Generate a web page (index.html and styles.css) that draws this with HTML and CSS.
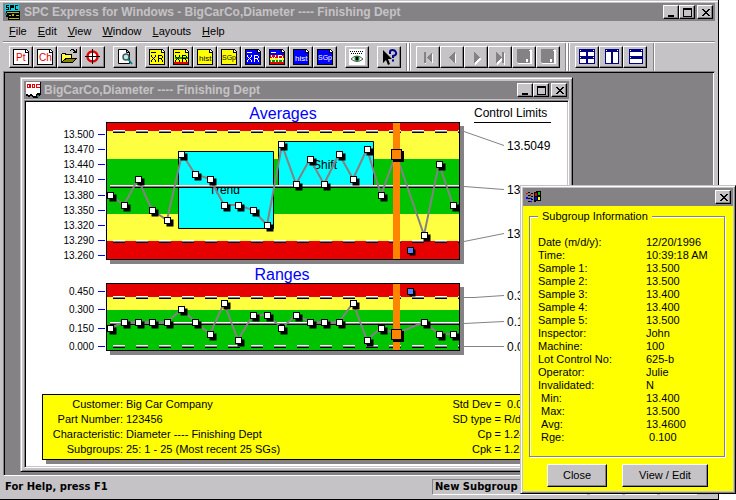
FILE: index.html
```html
<!DOCTYPE html>
<html lang="en">
<head>
<meta charset="utf-8">
<title>SPC Express for Windows</title>
<link rel="stylesheet" href="styles.css">
</head>
<body>
<svg class="defs" width="0" height="0" aria-hidden="true">
  <defs>
    <g id="pt"><path fill="#000" d="M-1-1h7v7h-7z"/><path fill="#000" d="M-3.500-3.500h7v7h-7z"/><path fill="#fff" d="M-2.500-2.500h5v5h-5z"/></g>
    <g id="removed"><path fill="#000" d="M-1-1h6v6h-6z"/><path fill="#000" d="M-3.500-3.500h7v7h-7z"/><path fill="#5a82ff" d="M-2.500-2.500h5v5h-5z"/></g>
    <g id="picked"><path fill="#000" d="M-3.500-3.500h11v11h-11z"/><path fill="#000" d="M-5.500-5.500h11v11h-11z"/><path fill="#ff8400" d="M-4.500-4.500h9v9h-9z"/></g>
    <g id="page"><path fill="#000" d="M0 0h13l3 3v13H0z"/><path fill="currentColor" d="M1 1h11v3h3v11H1z"/><path fill="#fff" d="M13 1h1v1h1v1h-2z"/></g>
    <g id="xr"><path d="M2 3h5v1H2zM2 6h1v2H2zM6 6h1v2H6zM3 8h1v1H3zM5 8h1v1H5zM4 9h1v1H4zM3 10h1v1H3zM5 10h1v1H5zM2 11h1v2H2zM6 11h1v2H6zM9 6h4v1h-3v2h3v1h-3v3H9zM13 7h1v2h-1zM12 10h1v1h-1zM13 11h1v2h-1z"/></g>
    <g id="min"><path fill="#000" d="M4 9h6v2H4z"/></g>
    <g id="max"><path fill="#000" fill-rule="evenodd" d="M3 2h9v9H3zM4 4v6h7V4z"/></g>
    <g id="cls"><path fill="#000" d="M4 3h2v1h1v1h2V4h1V3h2v1h-1v1h-1v1H9v1h1v1h1v1h1v1h-2V9H9V8H7v1H6v1H4V9h1V8h1V7h1V6H6V5H5V4H4z"/></g>
    <g id="disk"><path fill="#fff" d="M2 2h14v14H2z"/><path fill="#848284" d="M1 1h13v14H2l-1-1z"/><path fill="#fff" d="M10 11h2v3h-2zM13 2h1v1h-1z"/></g>
  </defs>
</svg>

<main class="app">
  <header class="titlebar">
    <svg class="appicon" width="16" height="16" viewBox="0 0 16 16" shape-rendering="crispEdges" aria-hidden="true">
      <path fill="#00d8e8" d="M0 0h14v8H0z"/><path fill="#000" d="M1 1h3v1H2v1h2v3H1V5h2V4H1zM5 1h4v3H6v2H5zM10 1h3v1h-2v3h2v1h-3z"/>
      <path fill="#000" d="M1 7h14v9H3v-3H1z"/><path fill="#b8b020" d="M2 8h12v1H2zM4 11h2v1H4zM7 10h2v2H7zM11 11h3v1h-3zM4 14h10v1H4z"/><path fill="#008484" d="M0 9h2v2H0z"/>
    </svg>
    <h1>SPC Express for Windows - BigCarCo,Diameter ---- Finishing Dept</h1>
    <span class="winbtns">
      <button aria-label="Minimize"><svg width="14" height="12"><use href="#min"/></svg></button><button aria-label="Maximize"><svg width="14" height="12"><use href="#max"/></svg></button><button class="x" aria-label="Close window"><svg width="14" height="12"><use href="#cls"/></svg></button>
    </span>
  </header>

  <nav class="menu">
    <a href="#"><u>F</u>ile</a><a href="#"><u>E</u>dit</a><a href="#"><u>V</u>iew</a><a href="#"><u>W</u>indow</a><a href="#"><u>L</u>ayouts</a><a href="#"><u>H</u>elp</a>
  </nav>

  <div class="toolbar">
    <div class="group">
      <button aria-label="Part"><svg width="18" height="18" shape-rendering="crispEdges"><g class="white" transform="translate(1 1)"><use href="#page"/></g><text class="red" x="4" y="13">Pt</text></svg></button>
      <button aria-label="Characteristic"><svg width="18" height="18" shape-rendering="crispEdges"><g class="white" transform="translate(1 1)"><use href="#page"/></g><text class="red" x="3" y="13">Ch</text></svg></button>
      <button aria-label="Open"><svg width="18" height="18" shape-rendering="crispEdges"><path fill="#000" d="M2 5h4v1h6v4h5v1h-1v1h-1v1h-1v1h-1v1H1V6h1z"/><path fill="#ffff42" d="M2 6h3v1h6v3H5v1H4v1H3v1H2z"/><path fill="#848200" d="M6 11h9v1h-1v1h-1v1H3v-1h1v-1h2z"/><path fill="#000" d="M10 2h1V1h3v1h1v1h1V1h1v4h-4V4h1V3h-1V2h-2v1h-1z"/></svg></button>
      <button aria-label="Target"><svg width="18" height="18"><circle cx="8.500" cy="8.500" r="5" fill="#fff" stroke="#e70000" stroke-width="2.500"/><path stroke="#000" d="M8.500 1v15M1 8.500h15" shape-rendering="crispEdges"/></svg></button>
    </div>
    <div class="group">
      <button aria-label="Preview"><svg width="18" height="18"><path fill="#fff" stroke="#000" d="M2.500 1.500h8l3 3v11h-11zM10.500 1.500v3h3"/><circle cx="10" cy="9" r="3" fill="#b0f0f0" stroke="#555" stroke-width="1.500"/><path stroke="#008484" stroke-width="2" d="M12 11l4 5"/></svg></button>
    </div>
    <div class="group">
      <button aria-label="X-bar R"><svg width="18" height="18" shape-rendering="crispEdges"><g class="yellow" transform="translate(1 1)"><use href="#page"/></g><use href="#xr" x="1" y="1" fill="#000"/></svg></button>
      <button aria-label="X-bar R with zones"><svg width="18" height="18" shape-rendering="crispEdges"><g class="yellow" transform="translate(1 1)"><use href="#page"/></g><path fill="#00a000" d="M3 9h13v2H3z"/><path fill="#e70000" d="M2 14h14v2H2z"/><use href="#xr" x="1" y="1" fill="#000"/></svg></button>
      <button aria-label="Histogram"><svg width="18" height="18" shape-rendering="crispEdges"><g class="yellow" transform="translate(1 1)"><use href="#page"/></g><text class="hist" x="3" y="13">hist</text></svg></button>
      <button aria-label="Subgroups"><svg width="18" height="18" shape-rendering="crispEdges"><g class="yellow" transform="translate(1 1)"><use href="#page"/></g><text class="sgp" x="2" y="12">SGp</text></svg></button>
      <button aria-label="New X-bar R"><svg width="18" height="18" shape-rendering="crispEdges"><g class="blue" transform="translate(1 1)"><use href="#page"/></g><use href="#xr" x="1" y="1" fill="#fff"/></svg></button>
      <button aria-label="New X-bar R with zones"><svg width="18" height="18" shape-rendering="crispEdges"><g class="blue" transform="translate(1 1)"><use href="#page"/></g><path fill="#e70000" d="M2 7h14v3H2z"/><path fill="#ffff00" d="M2 10h14v2H2z"/><path fill="#00a000" d="M2 12h14v2H2z"/><path fill="#e70000" d="M2 14h14v2H2z"/><use href="#xr" x="1" y="1" fill="#fff"/></svg></button>
      <button aria-label="New histogram"><svg width="18" height="18" shape-rendering="crispEdges"><g class="blue" transform="translate(1 1)"><use href="#page"/></g><text class="hist light" x="3" y="13">hist</text></svg></button>
      <button aria-label="New subgroups"><svg width="18" height="18" shape-rendering="crispEdges"><g class="blue" transform="translate(1 1)"><use href="#page"/></g><text class="sgp light" x="2" y="12">SGp</text></svg></button>
    </div>
    <div class="group">
      <button aria-label="Show"><svg width="18" height="18"><path fill="#fff" d="M1 1h16v16H1z"/><path fill="none" stroke="#000" stroke-dasharray="1 1" d="M2 3.500h14M3 5.500h12" shape-rendering="crispEdges"/><path fill="#fff" stroke="#555" d="M3 11q6-6 12 0q-6 5-12 0z"/><circle cx="9" cy="10.500" r="2.500" fill="#008020"/><path d="M8 9h2v3H8z"/></svg></button>
    </div>
    <div class="group">
      <button aria-label="Context help"><svg width="18" height="18"><path d="M3 2v13l3-3 2 5 2-1-2-5h4z"/><path fill="none" stroke="#000084" stroke-width="2" d="M10 6V4q0-2 2.500-2T16 4.500 13 8v2M13 11.500v2"/></svg></button>
    </div>
    <div class="group nav">
      <button aria-label="First"><svg width="18" height="18" shape-rendering="crispEdges"><path fill="#fff" d="M6 16V5h1v11zM14 5v11l-5-5z"/><path fill="#848284" d="M5 4h2v11H5zM13 4v11L8 9.500z"/></svg></button>
      <button aria-label="Previous"><svg width="18" height="18" shape-rendering="crispEdges"><path fill="#fff" d="M13 5v11l-5-5z"/><path fill="#848284" d="M12 4v11L6 9.500z"/></svg></button>
      <button aria-label="Next"><svg width="18" height="18" shape-rendering="crispEdges"><path fill="#fff" d="M8 5v12l6-6z"/><path fill="#848284" d="M7 4v11l6-5.500z"/></svg></button>
      <button aria-label="Last"><svg width="18" height="18" shape-rendering="crispEdges"><path fill="#fff" d="M6 5v12l6-6zM13 5h1v12h-1z"/><path fill="#848284" d="M5 4v11l6-5.500zM11 4h2v11h-2z"/></svg></button>
      <button aria-label="Save"><svg width="18" height="18" shape-rendering="crispEdges"><use href="#disk" x="1"/></svg></button>
      <button aria-label="Save all"><svg width="18" height="18" shape-rendering="crispEdges"><use href="#disk" x="1"/></svg></button>
    </div>
    <div class="group nav">
      <button aria-label="Tile"><svg width="18" height="18" shape-rendering="crispEdges"><path fill="#000084" d="M1 1h16v15H1z"/><path fill="#fff" d="M2 4h6v4H2zM10 4h6v4h-6zM2 11h6v4H2zM10 11h6v4h-6zM2 2h1v1H2zM15 2h1v1h-1zM2 9h1v1H2zM15 9h1v1h-1z"/></svg></button>
      <button aria-label="Tile vertically"><svg width="18" height="18" shape-rendering="crispEdges"><path fill="#000084" d="M3 1h14v15H3z"/><path fill="#fff" d="M4 4h5v11H4zM11 4h5v11h-5zM4 2h1v1H4zM15 2h1v1h-1z"/></svg></button>
      <button aria-label="Tile horizontally"><svg width="18" height="18" shape-rendering="crispEdges"><path fill="#000084" d="M3 1h14v15H3z"/><path fill="#fff" d="M4 4h12v4H4zM4 11h12v4H4zM4 2h1v1H4zM15 2h1v1h-1zM4 9h1v1H4z"/></svg></button>
    </div>
    <div class="end"></div>
  </div>

  <section class="mdi">
    <article class="child">
      <header class="titlebar">
        <svg class="docicon" width="15" height="16" viewBox="0 0 15 16" shape-rendering="crispEdges" aria-hidden="true">
          <path d="M0 0h15v12l-3 4H7l-2-2-2 1-3-1z" fill="#000"/><path fill="#fff" d="M0 0h14v11h-3l-1 3H7l-2-2-2 1-3-1z"/>
          <path fill="#e70000" fill-rule="evenodd" d="M1 2h3l1 1v2L4 6H1zM2 3v2h1V3zM6 2h3v4H6zM7 3v2h1V3zM10 2h4v1h-3v2h3v1h-4z"/><path fill="#008484" d="M11 13h2v2h-2z"/>
        </svg>
        <h2>BigCarCo,Diameter ---- Finishing Dept</h2>
        <span class="winbtns">
          <button aria-label="Minimize chart"><svg width="14" height="12"><use href="#min"/></svg></button><button aria-label="Maximize chart"><svg width="14" height="12"><use href="#max"/></svg></button><button class="x" aria-label="Close chart"><svg width="14" height="12"><use href="#cls"/></svg></button>
        </span>
      </header>

      <div class="client">
        <svg class="chart" viewBox="26 102 541 162" role="img" aria-label="Averages chart">
          <text class="heading" x="283" y="119">Averages</text>
          <text class="limit" x="474" y="117">Control Limits</text><path stroke="#000" d="M474 122.500h77"/>
          <g class="axis"><text x="94" y="138">13.500</text><text x="94" y="153">13.470</text><text x="94" y="168">13.440</text><text x="94" y="183">13.410</text><text x="94" y="199">13.380</text><text x="94" y="214">13.350</text><text x="94" y="229">13.320</text><text x="94" y="244">13.290</text><text x="94" y="259">13.260</text></g>
          <path stroke="#00f" d="M98 134.500h7M98 149.500h7M98 164.500h7M98 179.500h7M98 195.500h7M98 210.500h7M98 225.500h7M98 240.500h7M98 255.500h7"/>
          <path fill="#848284" d="M110 126h354v138H110z"/>
          <path fill="#000" d="M106 122h354v138H106z"/>
          <path fill="#e70000" d="M107 123h352v136H107z"/><path fill="#ffff42" d="M107 131h352v110H107z"/><path fill="#00c300" d="M107 159h352v55H107z"/>
          <g fill="#0ff" stroke="#000"><path d="M178.500 151.500h95v77h-95zM278.500 141.500h95v45h-95z"/></g>
          <text class="limit" x="209" y="194">Trend</text><text class="limit" x="313" y="169">Shift</text>
          <g class="dash"><path stroke="#fff" d="M113 130.500h346M113 240.500h346"/><path stroke="#848284" d="M113 131.500h346M113 241.500h346"/><path stroke="#000" d="M113 132.500h346M113 242.500h346"/></g>
          <path stroke="#fff" d="M110 185.500h349"/><path stroke="#848284" d="M110 186.500h349"/><path stroke="#000" d="M110 187.500h349"/>
          <polyline class="series" points="110,195 124,205 138,179 152,210 167,220 182,154 195,174 210,179 224,205 238,205 253,210 267,225 282,145 296,184 310,159 324,184 339,154 353,179 367,149 381,195 396,154 424,235 439,164 453,205"/>
          <path fill="#ff8400" d="M393 123h7v136h-7z"/>
          <use href="#pt" x="110.500" y="195.500"/><use href="#pt" x="124.500" y="205.500"/><use href="#pt" x="138.500" y="179.500"/><use href="#pt" x="152.500" y="210.500"/><use href="#pt" x="167.500" y="220.500"/><use href="#pt" x="181.500" y="154.500"/><use href="#pt" x="195.500" y="174.500"/><use href="#pt" x="210.500" y="179.500"/><use href="#pt" x="224.500" y="205.500"/><use href="#pt" x="238.500" y="205.500"/><use href="#pt" x="253.500" y="210.500"/><use href="#pt" x="267.500" y="225.500"/><use href="#pt" x="281.500" y="144.500"/><use href="#pt" x="296.500" y="184.500"/><use href="#pt" x="310.500" y="159.500"/><use href="#pt" x="324.500" y="184.500"/><use href="#pt" x="339.500" y="154.500"/><use href="#pt" x="353.500" y="179.500"/><use href="#pt" x="367.500" y="149.500"/><use href="#pt" x="381.500" y="195.500"/><use href="#picked" x="396.500" y="154.500"/><use href="#removed" x="410.500" y="250.500"/><use href="#pt" x="424.500" y="235.500"/><use href="#pt" x="439.500" y="164.500"/><use href="#pt" x="453.500" y="205.500"/>
          <path class="leader" d="M464 131.500l40 14M464 186.500l40 3M464 241.500l40-8"/>
          <text class="limit" x="507" y="150">13.5049</text><text class="limit" x="507" y="194">13.3956</text><text class="limit" x="507" y="238">13.2863</text>
        </svg>
        <svg class="chart" viewBox="26 264 541 110" role="img" aria-label="Ranges chart">
          <text class="heading" x="282" y="280">Ranges</text>
          <g class="axis"><text x="94" y="295">0.450</text><text x="94" y="313">0.300</text><text x="94" y="332">0.150</text><text x="94" y="350">0.000</text></g>
          <path stroke="#00f" d="M98 291.500h7M98 309.500h7M98 328.500h7M98 346.500h7"/>
          <path fill="#848284" d="M110 287h354v68H110z"/>
          <path fill="#000" d="M106 283h354v68H106z"/>
          <path fill="#e70000" d="M107 284h352v13H107z"/><path fill="#ffff42" d="M107 297h352v13H107z"/><path fill="#00c300" d="M107 310h352v40H107z"/>
          <g class="dash"><path stroke="#fff" d="M113 296.500h346M113 345.500h346"/><path stroke="#848284" d="M113 297.500h346M113 346.500h346"/><path stroke="#000" d="M113 298.500h346M113 347.500h346"/></g>
          <path stroke="#fff" d="M110 322.500h349"/><path stroke="#848284" d="M110 323.500h349"/><path stroke="#000" d="M110 324.500h349"/>
          <polyline class="series" points="110,328 124,322 138,322 152,322 167,322 182,309 195,322 210,334 224,303 238,340 253,315 267,315 282,328 296,315 310,322 324,322 339,322 353,303 367,340 381,328 396,334 424,322 439,334 453,334"/>
          <path fill="#ff8400" d="M393 284h7v66h-7z"/>
          <use href="#pt" x="110.500" y="328.500"/><use href="#pt" x="124.500" y="322.500"/><use href="#pt" x="138.500" y="322.500"/><use href="#pt" x="152.500" y="322.500"/><use href="#pt" x="167.500" y="322.500"/><use href="#pt" x="181.500" y="309.500"/><use href="#pt" x="195.500" y="322.500"/><use href="#pt" x="210.500" y="334.500"/><use href="#pt" x="224.500" y="303.500"/><use href="#pt" x="238.500" y="340.500"/><use href="#pt" x="253.500" y="315.500"/><use href="#pt" x="267.500" y="315.500"/><use href="#pt" x="281.500" y="328.500"/><use href="#pt" x="296.500" y="315.500"/><use href="#pt" x="310.500" y="322.500"/><use href="#pt" x="324.500" y="322.500"/><use href="#pt" x="339.500" y="322.500"/><use href="#pt" x="353.500" y="303.500"/><use href="#pt" x="367.500" y="340.500"/><use href="#pt" x="381.500" y="328.500"/><use href="#picked" x="396.500" y="334.500"/><use href="#removed" x="410.500" y="291.500"/><use href="#pt" x="424.500" y="322.500"/><use href="#pt" x="439.500" y="334.500"/><use href="#pt" x="453.500" y="334.500"/>
          <path class="leader" d="M464 297.500h10l30-2M464 323.500l40-2M464 346.500h40"/>
          <text class="limit" x="507" y="300">0.39</text><text class="limit" x="507" y="326">0.19</text><text class="limit" x="507" y="351">0.00</text>
        </svg>

        <dl class="info">
          <dt>Customer:</dt><dd>Big Car Company</dd><dt>Std Dev =</dt><dd>&nbsp;0.08</dd>
          <dt>Part Number:</dt><dd>123456</dd><dt>SD type =</dt><dd>R/d2</dd>
          <dt>Characteristic:</dt><dd>Diameter ---- Finishing Dept</dd><dt>Cp =</dt><dd>1.24</dd>
          <dt>Subgroups:</dt><dd>25: 1 - 25 (Most recent 25 SGs)</dd><dt>Cpk =</dt><dd>1.22</dd>
        </dl>
      </div>
    </article>
  </section>

  <footer class="status">
    <span class="help">For Help, press F1</span>
    <span class="cell">New Subgroup</span><span class="cell small"></span><span class="cell small"></span><span class="cell last"></span>
  </footer>
</main>

<section class="dialog" role="dialog" aria-label="Subgroup Information">
  <header class="titlebar">
    <svg width="17" height="16" viewBox="0 0 17 16" shape-rendering="crispEdges" aria-hidden="true">
      <path fill="#000" d="M9 3h2V2h5v10h-5v1H9zM6 4h2v1H6zM6 7h2v1H6zM6 10h2v1H6zM3 3h2v1H3zM3 6h2v1H3zM3 9h2v1H3zM3 12h2v1H3z"/>
      <path fill="#e70000" d="M10 4h2v3h-2zM1 4h2v1H1zM5 5h1v2H5z"/><path fill="#00c300" d="M13 3h2v3h-2z"/><path fill="#00f" d="M10 8h2v3h-2zM1 8h2v2H1zM5 9h2v1H5zM5 12h2v1H5z"/><path fill="#ff0" d="M13 8h2v3h-2z"/>
    </svg>
    <span class="winbtns"><button class="x" aria-label="Close dialog"><svg width="14" height="12"><use href="#cls"/></svg></button></span>
  </header>
  <div class="body">
    <fieldset>
      <legend>Subgroup Information</legend>
      <table>
        <tr><th>Date (m/d/y):</th><td>12/20/1996</td></tr>
        <tr><th>Time:</th><td>10:39:18 AM</td></tr>
        <tr><th>Sample 1:</th><td>13.500</td></tr>
        <tr><th>Sample 2:</th><td>13.500</td></tr>
        <tr><th>Sample 3:</th><td>13.400</td></tr>
        <tr><th>Sample 4:</th><td>13.400</td></tr>
        <tr><th>Sample 5:</th><td>13.500</td></tr>
        <tr><th>Inspector:</th><td>John</td></tr>
        <tr><th>Machine:</th><td>100</td></tr>
        <tr><th>Lot Control No:</th><td>625-b</td></tr>
        <tr><th>Operator:</th><td>Julie</td></tr>
        <tr><th>Invalidated:</th><td>N</td></tr>
        <tr><th>&nbsp;Min:</th><td>13.400</td></tr>
        <tr><th>&nbsp;Max:</th><td>13.500</td></tr>
        <tr><th>&nbsp;Avg:</th><td>13.4600</td></tr>
        <tr><th>&nbsp;Rge:</th><td>&nbsp;0.100</td></tr>
      </table>
    </fieldset>
    <div class="actions"><button>Close</button><button class="wide">View / Edit</button></div>
  </div>
</section>
</body>
</html>
```
FILE: styles.css
```css
:root {
  --face: #c6c3c6;
  --shade: #848284;
}

* { box-sizing: border-box; }

body {
  margin: 0;
  background: #fff;
  color: #000;
  font: 11px/13px "Liberation Sans", Arial, sans-serif;
}

.defs { position: absolute; }

button { font: inherit; color: inherit; padding: 0; }
button svg { display: block; }

/* Main window */
.app {
  display: flex;
  flex-direction: column;
  min-height: 100vh;
  margin-right: 17px;
  padding: 3px;
  background: var(--face);
  border-right: 1px solid #000;
  border-bottom: 1px solid #000;
  box-shadow: inset 0 1px var(--face), inset 0 2px #fff;
}

.titlebar {
  display: flex;
  align-items: center;
  gap: 3px;
  height: 18px;
  padding: 0 2px;
  background: var(--shade);
  color: var(--face);
}

.titlebar h1, .titlebar h2 {
  flex: 1;
  margin: 0;
  font-size: 12px;
  line-height: 18px;
  white-space: nowrap;
  overflow: hidden;
}

.winbtns { display: flex; margin-left: auto; }

.winbtns button, .toolbar button, .actions button {
  background: var(--face);
  border: 1px solid;
  border-color: #fff #000 #000 #fff;
  box-shadow: inset -1px -1px var(--shade);
}

.winbtns button { width: 16px; height: 14px; }
.winbtns .x { margin-left: 2px; }

.menu {
  display: flex;
  height: 21px;
  align-items: center;
  padding-left: 1px;
  border-bottom: 1px solid var(--shade);
}

.menu a {
  padding: 0 6px 0 5px;
  color: #000;
  text-decoration: none;
}

/* Toolbar */
.toolbar {
  display: flex;
  height: 29px;
  border-top: 1px solid #fff;
}

.group { display: flex; padding: 3px 2px 3px 6px; }
.group button { display: grid; place-items: center; width: 24px; height: 22px; }
.nav {
  margin-left: 6px;
  border-left: 1px solid var(--shade);
  box-shadow: inset 1px 0 #fff, -2px 0 #fff, -3px 0 var(--shade);
}
.end {
  width: 2px;
  margin-left: 4px;
  background: #fff;
  border-left: 1px solid var(--shade);
}
.toolbar text { font: 10px "Liberation Sans", sans-serif; }
.toolbar .hist { font-size: 8px; }
.toolbar .sgp { font-size: 7px; }
.red { fill: #e70000; }
.light { fill: #fff; }
.white { color: #fff; }
.yellow { color: #ff0; }
.blue { color: #00f; }

/* Workspace */
.mdi {
  position: relative;
  flex: 1;
  background: var(--shade);
  border: 1px solid;
  border-color: var(--shade) var(--face) #fff var(--shade);
  box-shadow: inset 1px 1px #000, inset -1px 0 #fff;
}

.child {
  position: absolute;
  top: 5px;
  right: 141px;
  bottom: 3px;
  left: 16px;
  display: flex;
  flex-direction: column;
  padding: 3px;
  background: var(--face);
  border: 1px solid;
  border-color: var(--face) #000 #000 var(--face);
  box-shadow: inset 1px 1px #fff, inset -1px -1px var(--shade);
}

.client {
  flex: 1;
  margin-top: 1px;
  padding: 1px;
  background: #fff;
  border: 1px solid;
  border-color: var(--shade) #fff #fff var(--shade);
  box-shadow: inset 1px 1px #000, inset -1px -1px var(--face);
}

/* Charts */
.chart { display: block; width: 100%; }
.heading { font-size: 16px; fill: #00f; text-anchor: middle; }
.limit { font-size: 12px; }
.axis { font-size: 10px; text-anchor: end; }
.dash { stroke-dasharray: 12 11; }
.series { fill: none; stroke: #848284; stroke-width: 2; }
.leader { fill: none; stroke: #848284; }

.info {
  display: grid;
  grid-template-columns: 80px 1fr auto 46px;
  column-gap: 3px;
  margin: 20px 16px 0;
  padding: 2px 0;
  line-height: 15px;
  background: #ff0;
  border: 1px solid #000;
  box-shadow: 4px 4px var(--shade);
}
.info dt { text-align: right; }
.info dd { margin: 0; white-space: nowrap; }

/* Status bar */
.status {
  display: flex;
  gap: 2px;
  height: 20px;
  padding: 3px 18px 1px 2px;
  font: bold 10px/16px "DejaVu Sans", sans-serif;
}
.help { flex: 1; }
.cell {
  width: 155px;
  padding-left: 2px;
  border: 1px solid;
  border-color: var(--shade) #fff #fff var(--shade);
  line-height: 14px;
}
.small { width: 33px; }
.last { width: 38px; }

/* Subgroup dialog */
.dialog {
  position: absolute;
  top: 185px;
  left: 520px;
  width: 216px;
  padding: 2px;
  background: var(--face);
  border: 1px solid;
  border-color: var(--face) #000 #000 var(--face);
  box-shadow: inset 1px 1px #fff, inset -1px -1px var(--shade);
}

.body { padding: 4px 6px; background: #ff0; }

fieldset {
  margin: 0 2px 0 0;
  padding: 13px 0 12px 8px;
  border: 1px solid var(--shade);
  box-shadow: inset 1px 1px #fff, 1px 1px #fff;
  min-width: 0;
}
legend { margin-left: 0; padding: 0 4px; background: #ff0; }

table { border-collapse: collapse; width: 100%; }
th, td { padding: 0; line-height: 13px; font-weight: normal; text-align: left; white-space: nowrap; }
th { width: 108px; }

.actions { display: flex; gap: 15px; padding: 7px 0 0 18px; }
.actions button { width: 60px; height: 23px; }
.actions .wide { width: 86px; }
```
